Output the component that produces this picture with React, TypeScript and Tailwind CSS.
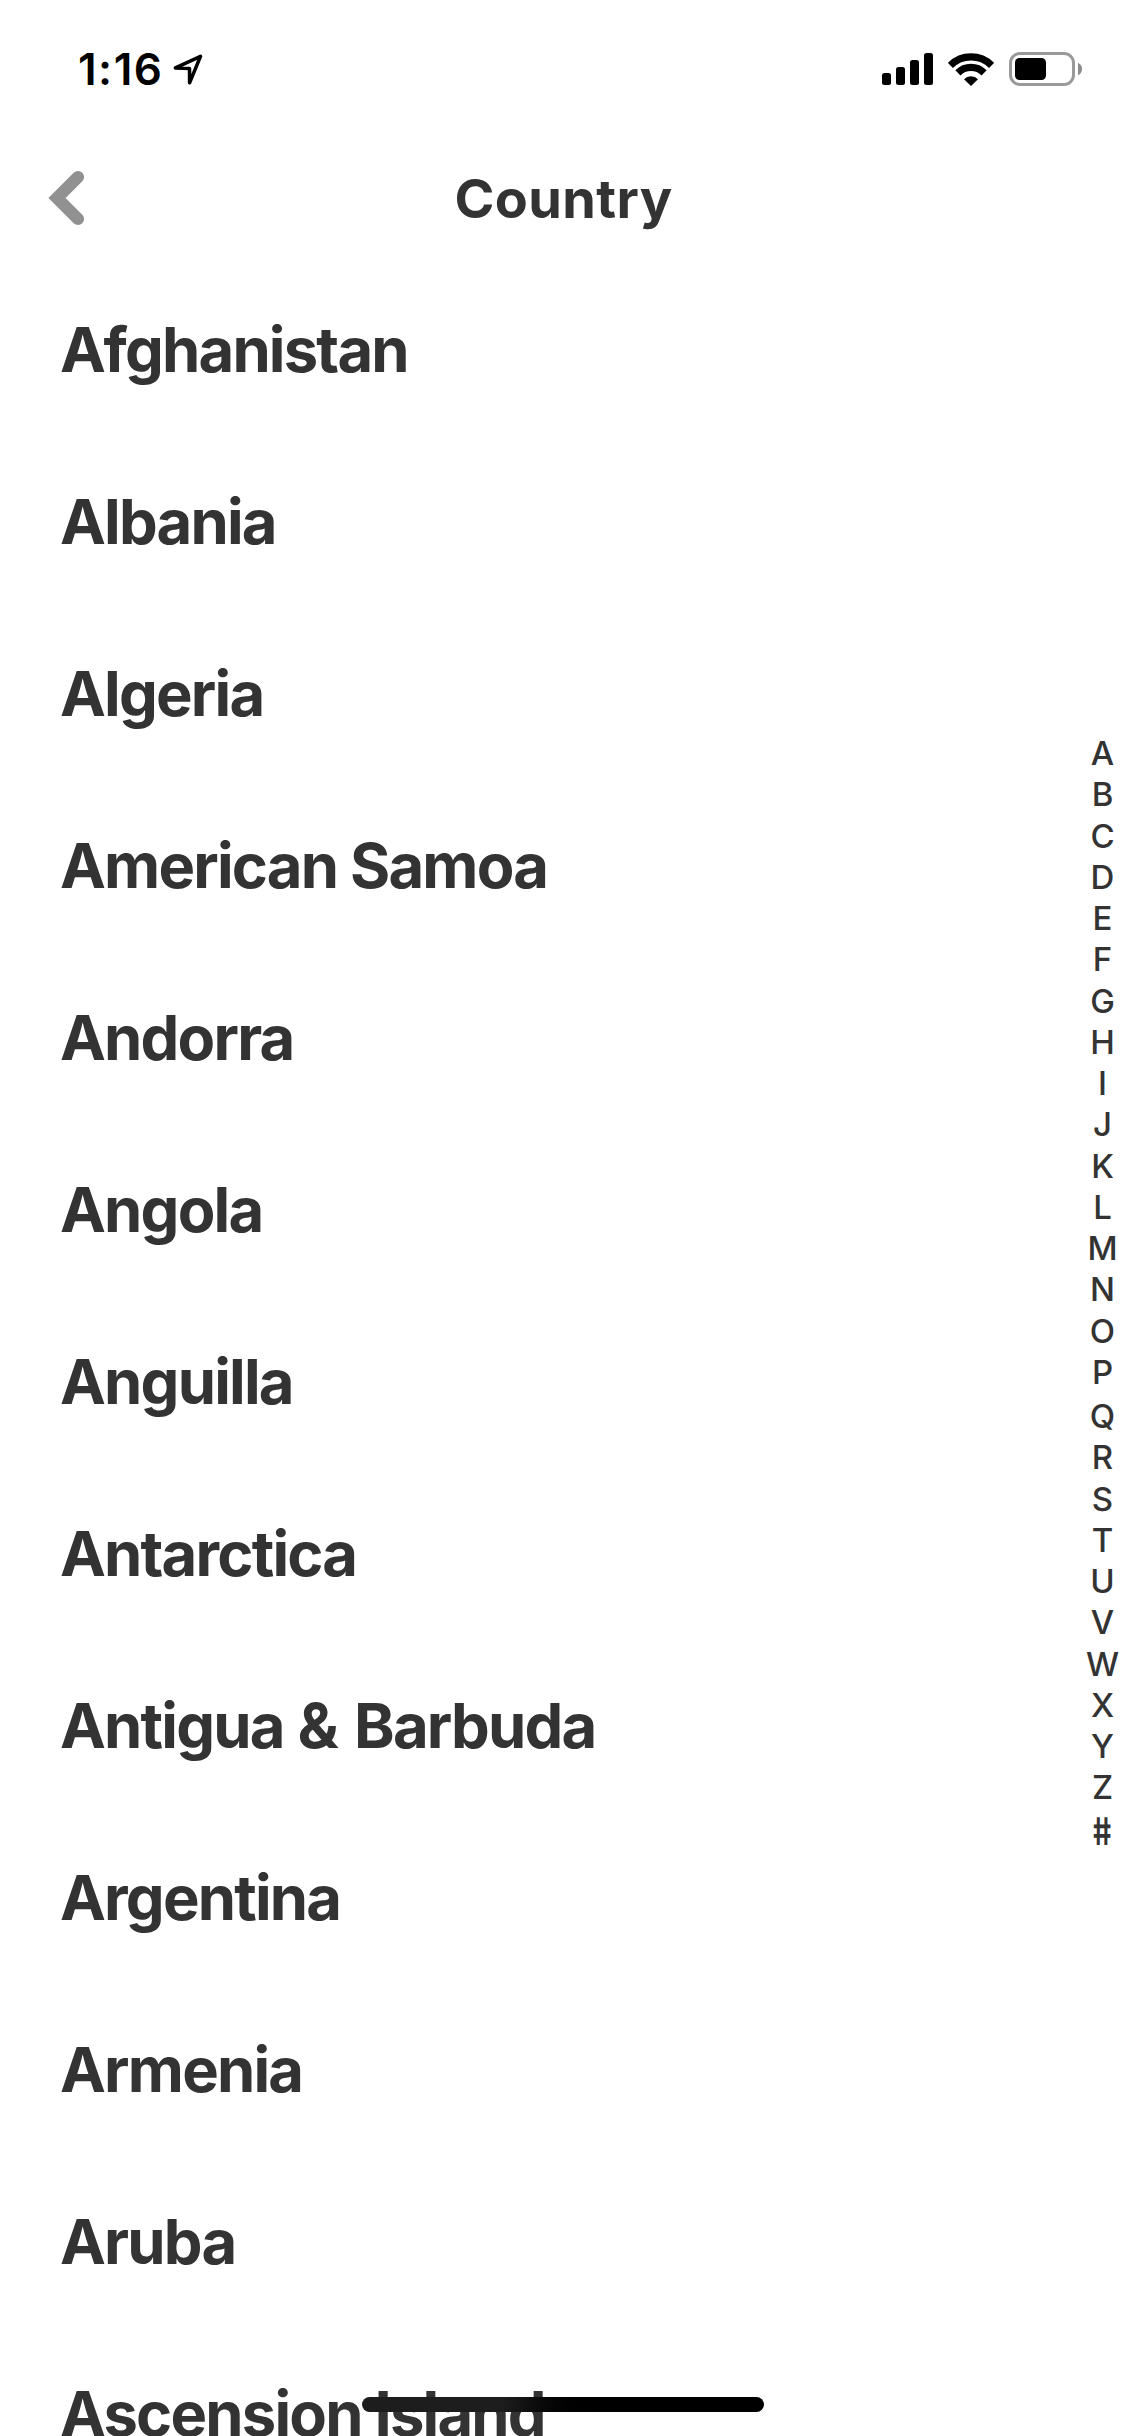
import { Fragment } from "react";

const countries = [
  "Afghanistan",
  "Albania",
  "Algeria",
  "American Samoa",
  "Andorra",
  "Angola",
  "Anguilla",
  "Antarctica",
  "Antigua & Barbuda",
  "Argentina",
  "Armenia",
  "Aruba",
  "Ascension Island",
];

const beforeQ = "ABCDEFGHIJKLMNOP".split("");
const fromQ = "QRSTUVWXYZ".split("");

function LocationIcon() {
  return (
    <svg width="32" height="32" viewBox="0 0 32 32" fill="none" className="ml-[8px]">
      <path d="M4.4 14.9 29.5 3.4 18.6 29.8 18.5 15.6Z" stroke="black" strokeWidth="3.5" strokeLinejoin="round" />
    </svg>
  );
}

function SignalIcon() {
  return (
    <svg width="51" height="32" viewBox="0 0 51 32">
      <rect x="0" y="20" width="9" height="12" rx="2.5" />
      <rect x="14" y="14" width="9" height="18" rx="2.5" />
      <rect x="28" y="7" width="9" height="25" rx="2.5" />
      <rect x="42" y="0" width="9" height="32" rx="2.5" />
    </svg>
  );
}

function WifiIcon() {
  return (
    <svg width="46" height="33" viewBox="0 0 46 33" className="ml-[15px]">
      <path d="M2.4 12.4a29.2 29.2 0 0 1 41.2 0" fill="none" stroke="black" strokeWidth="7.2" />
      <path d="M9.9 19.9a18.5 18.5 0 0 1 26.2 0" fill="none" stroke="black" strokeWidth="7.2" />
      <path d="M23 33 16 26.2a10 10 0 0 1 14 0Z" />
    </svg>
  );
}

function BatteryIcon() {
  return (
    <svg width="74" height="34" viewBox="0 0 74 34" className="ml-[15px]">
      <rect x="1.5" y="1.5" width="63" height="31" rx="9.5" fill="none" stroke="#999999" strokeWidth="3" />
      <rect x="6" y="6" width="31" height="22" rx="4.5" />
      <path d="M69 10.7q4 2 4 6.3t-4 6.3Z" fill="#8c8c8c" />
    </svg>
  );
}

/* Gives the ampersand looser tracking than the words around it. */
function CountryName({ name }: { name: string }) {
  return (
    <span>
      {name.split("&").map((part, i) => (
        <Fragment key={part}>
          {i > 0 && <span className="mr-[2px] ml-px tracking-[0.5px]">&amp;</span>}
          {part}
        </Fragment>
      ))}
    </span>
  );
}

export default function App() {
  return (
    <div className="relative flex h-[2436px] w-[1125px] flex-col overflow-hidden bg-white font-['Inter',sans-serif] text-[#333333]">
      <div className="flex h-[132px] shrink-0 items-center justify-between pt-[6px] pr-[42px] pl-[78px] text-black">
        <div className="flex items-center">
          <span className="text-[44px] font-semibold tracking-[1.5px]">1:16</span>
          <LocationIcon />
        </div>
        <div className="flex items-center">
          <SignalIcon />
          <WifiIcon />
          <BatteryIcon />
        </div>
      </div>
      <header className="grid h-[132px] shrink-0 grid-cols-[1fr_auto_1fr] items-center">
        <button aria-label="Back" className="pl-[47px]">
          <svg width="40" height="56" viewBox="0 0 40 56" fill="none">
            <path d="M31 7 10 28 31 49" stroke="#919191" strokeWidth="12.2" strokeLinecap="round" strokeLinejoin="miter" />
          </svg>
        </button>
        <h1 className="pl-[2px] text-[54px] font-bold tracking-[0.4px]">Country</h1>
      </header>
      <ul>
        {countries.map((c) => (
          <li key={c} className="flex h-[172px] items-center pl-[60px] text-[61.5px] font-bold tracking-[-1.8px]">
            <CountryName name={c} />
          </li>
        ))}
      </ul>
      <nav className="absolute top-[733px] right-0 flex w-[45px] flex-col items-center text-[33px] leading-[41.25px] font-medium">
        {beforeQ.map((l) => (
          <span key={l}>{l}</span>
        ))}
        <div className="flex flex-col items-center pt-[3px]">
          {fromQ.map((l) => (
            <span key={l}>{l}</span>
          ))}
        </div>
        <span className="mt-[2px] -skew-x-[-9deg] scale-x-[0.78] text-[38px] font-semibold">#</span>
      </nav>
      <div className="absolute top-[2397px] left-[362px] h-[15px] w-[402px] rounded-full bg-linear-to-r from-[#1d1d1d] from-35% to-black to-60%" />
    </div>
  );
}
